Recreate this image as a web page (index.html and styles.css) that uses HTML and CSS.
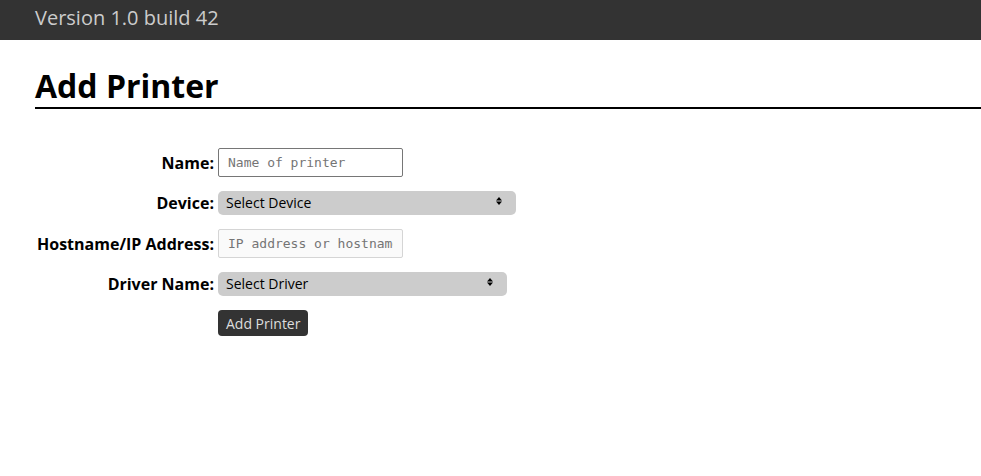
FILE: index.html
```html
<!DOCTYPE html>
<html>
<head>
<meta charset="utf-8">
<link rel="stylesheet" href="styles.css">
</head>
<body>
<header class="topbar"><span class="version">Version 1.0 build 42</span></header>
<main class="content">
  <h1 class="title">Add Printer</h1>
  <form class="form">
    <label class="label" for="name">Name:</label>
    <div class="field"><input class="text-input" id="name" type="text" placeholder="Name of printer"></div>
    <label class="label" for="device">Device:</label>
    <div class="field select-wrap">
      <select class="select select-device" id="device"><option>Select Device</option></select>
      <svg class="select-arrow" width="6" height="8" viewBox="0 0 6 8"><path d="M0 3.5 L3 0 L6 3.5 Z M0 4.5 L3 8 L6 4.5 Z" fill="#000"/></svg>
    </div>
    <label class="label" for="host">Hostname/IP Address:</label>
    <div class="field"><input class="text-input text-input-disabled" id="host" type="text" placeholder="IP address or hostname" disabled></div>
    <label class="label" for="driver">Driver Name:</label>
    <div class="field select-wrap">
      <select class="select select-driver" id="driver"><option>Select Driver</option></select>
      <svg class="select-arrow" width="6" height="8" viewBox="0 0 6 8"><path d="M0 3.5 L3 0 L6 3.5 Z M0 4.5 L3 8 L6 4.5 Z" fill="#000"/></svg>
    </div>
    <div></div>
    <div class="field"><button class="button" type="button">Add Printer</button></div>
  </form>
</main>
</body>
</html>
```
FILE: styles.css
```css
html, body {
  margin: 0;
  padding: 0;
  background: #fff;
  font-family: "Open Sans", sans-serif;
}
.topbar {
  height: 40px;
  background: #333333;
  display: flex;
  align-items: center;
  padding-left: 35px;
}
.version {
  color: #cccccc;
  font-size: 20px;
  line-height: 1;
  margin-top: -4px;
}
.content {
  padding-left: 35px;
}
.title {
  margin: 0;
  padding-top: 26px;
  font-size: 32px;
  font-weight: 700;
  line-height: 40px;
  padding-bottom: 1px;
  border-bottom: 2px solid #000;
  color: #000;
}
.form {
  display: grid;
  grid-template-columns: 179px auto;
  column-gap: 4px;
  row-gap: 14px;
  margin-top: 39px;
  align-items: center;
  justify-content: start;
}
.label {
  text-align: right;
  font-weight: 700;
  font-size: 16px;
  color: #000;
  white-space: nowrap;
}
.field {
  display: flex;
}
.select-wrap {
  position: relative;
  width: max-content;
}
.select-arrow {
  position: absolute;
  right: 14px;
  top: 6px;
  pointer-events: none;
}
.text-input {
  width: 185px;
  height: 29px;
  box-sizing: border-box;
  border: 1px solid #767676;
  border-radius: 2px;
  padding: 0 9px;
  font-family: "DejaVu Sans Mono", monospace;
  font-size: 13px;
  background: #fff;
}
.text-input::placeholder {
  color: #757575;
}
.text-input-disabled {
  border-color: #d5d5d5;
  background: #fafafa;
}
.select {
  appearance: none;
  -webkit-appearance: none;
  height: 24px;
  box-sizing: border-box;
  border: none;
  border-radius: 5px;
  background-color: #cccccc;
  font-family: "Open Sans", sans-serif;
  font-size: 14px;
  color: #000;
  padding: 0 8px 2px;
}
.select-device { width: 298px; }
.select-driver { width: 289px; }
.button {
  height: 26px;
  padding: 0 8px;
  border: none;
  border-radius: 4px;
  background: #333333;
  color: #dddddd;
  font-family: "Open Sans", sans-serif;
  font-size: 14px;
}
```
